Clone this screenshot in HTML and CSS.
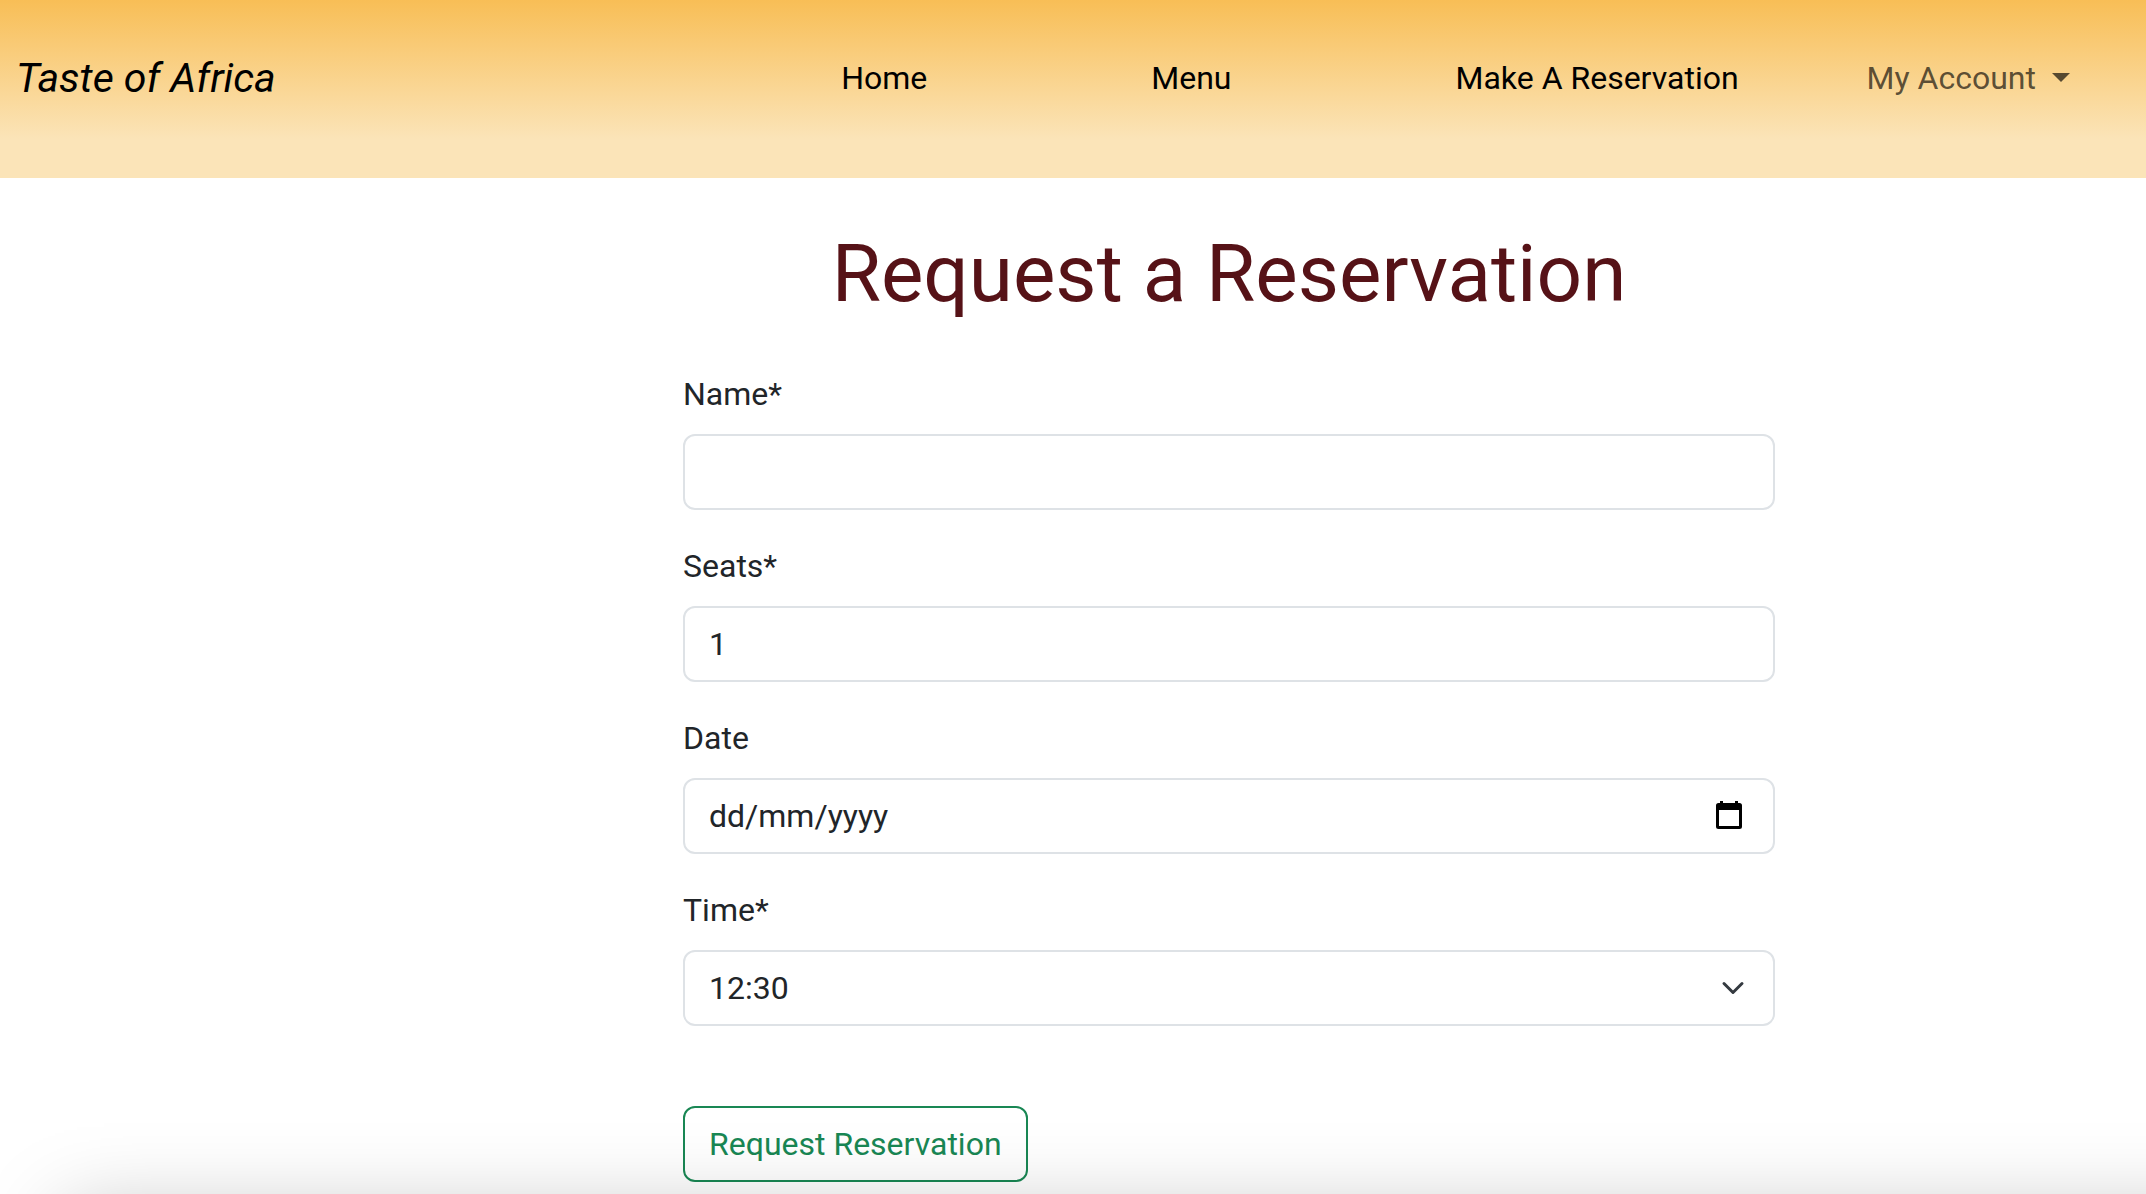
FILE: index.html
```html
<!DOCTYPE html>
<html lang="en-GB">
<head>
  <meta charset="utf-8">
  <title>Taste of Africa</title>
  <meta name="viewport" content="width=device-width, initial-scale=1">
  <link rel="stylesheet" href="styles.css">
</head>
<body>
  <header class="site-header">
    <a class="brand" href="#">Taste of Africa</a>
    <nav class="site-nav" aria-label="Main">
      <a class="nav-link" href="#">Home</a>
      <a class="nav-link" href="#">Menu</a>
      <a class="nav-link" href="#">Make A Reservation</a>
      <button class="nav-toggle" type="button" aria-haspopup="true">My Account<span class="caret"></span></button>
    </nav>
  </header>

  <main class="page">
    <form class="reservation">
      <h1 class="title">Request a Reservation</h1>

      <div class="field">
        <label for="name">Name*</label>
        <input class="control" id="name" type="text" required>
      </div>

      <div class="field">
        <label for="seats">Seats*</label>
        <input class="control" id="seats" type="text" inputmode="numeric" value="1" required>
      </div>

      <div class="field">
        <label for="date">Date</label>
        <div class="control-wrap">
          <input class="control" id="date" type="text" placeholder="dd/mm/yyyy">
          <button class="calendar" type="button" aria-label="Show date picker">
            <svg viewBox="0 0 26 28" width="26" height="28" aria-hidden="true">
              <path fill-rule="evenodd" d="M4 0h3v2h12V0h3v2h1.500a2.500 2.500 0 0 1 2.500 2.500v21a2.500 2.500 0 0 1-2.500 2.500h-21A2.500 2.500 0 0 1 0 25.500v-21A2.500 2.500 0 0 1 2.500 2H4zM3 9v16h20V9z"/>
            </svg>
          </button>
        </div>
      </div>

      <div class="field">
        <label for="time">Time*</label>
        <div class="control-wrap">
          <select class="control" id="time" required>
            <option>12:30</option>
          </select>
          <svg class="chevron" viewBox="0 0 16 16" width="24" height="24" aria-hidden="true">
            <path d="m2 5 6 6 6-6"/>
          </svg>
        </div>
      </div>

      <button class="submit" type="submit">Request Reservation</button>
    </form>
  </main>
  <div class="bottom-shade" aria-hidden="true"></div>
</body>
</html>
```
FILE: styles.css
```css
*,
*::before,
*::after {
  box-sizing: border-box;
}

body {
  margin: 0;
  background: #fff;
  color: #212529;
  font: 400 32px/48px Roboto, sans-serif;
}

button,
input,
select {
  font: inherit;
  color: inherit;
}

/* Header */
.site-header {
  display: flex;
  align-items: center;
  justify-content: space-between;
  padding: 48px 76px 70px 16px;
  background: linear-gradient(#f8be56 0%, #fbe4b8 78%, #fbe4b8 100%);
}

.brand {
  color: #000;
  font-size: 41px;
  line-height: 60px;
  font-style: italic;
  text-decoration: none;
}

.site-nav {
  display: flex;
  align-items: center;
}

.nav-link {
  margin-right: 96px;
  padding: 0 16px;
  color: #000;
  text-decoration: none;
}

.nav-link + .nav-link {
  margin-left: 96px;
}

.nav-toggle {
  display: flex;
  align-items: center;
  gap: 16px;
  padding: 0 0 0 16px;
  border: 0;
  background: none;
  color: rgba(0, 0, 0, 0.65);
}

.caret {
  margin-bottom: 2px;
  border: solid transparent;
  border-width: 9px 9px 0;
  border-top-color: currentColor;
}

/* Reservation form */
.page {
  display: grid;
  grid-template-columns: 683fr 1092fr 371fr;
  padding: 48px 0 12px;
}

.reservation {
  grid-column: 2;
}

.title {
  margin: 0 0 48px;
  color: #561217;
  font-size: 80px;
  font-weight: 400;
  line-height: 96px;
  text-align: center;
}

.field {
  display: grid;
  gap: 16px;
  margin-bottom: 32px;
}

.control {
  display: block;
  width: 100%;
  padding: 12px 24px;
  border: 2px solid #dee2e6;
  border-radius: 12px;
  background: #fff;
  line-height: 48px;
  height: 76px;
  appearance: none;
}

.control::placeholder {
  color: #212529;
  opacity: 1;
}

.control-wrap {
  position: relative;
}

.calendar {
  position: absolute;
  top: 0;
  bottom: 2px;
  right: 33px;
  display: flex;
  align-items: center;
  padding: 0;
  border: 0;
  background: none;
}

.chevron {
  position: absolute;
  top: 26px;
  right: 30px;
  fill: none;
  stroke: #343a40;
  stroke-width: 2;
  stroke-linecap: round;
  stroke-linejoin: round;
  pointer-events: none;
}

.submit {
  margin-top: 48px;
  padding: 12px 24px;
  border: 2px solid #198754;
  border-radius: 12px;
  background: none;
  color: #198754;
}

/* Soft shade along the bottom edge of the window */
.bottom-shade {
  position: fixed;
  left: 64px;
  right: -200px;
  bottom: -420px;
  height: 400px;
  box-shadow: 0 0 80px rgba(0, 0, 0, 0.25);
  pointer-events: none;
}
```
